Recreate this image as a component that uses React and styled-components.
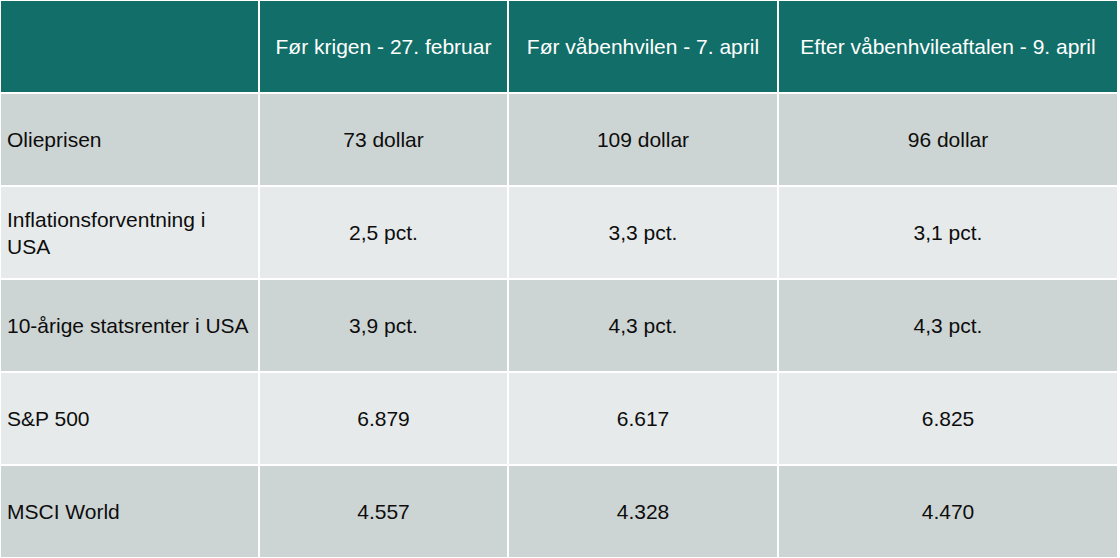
import styled, { createGlobalStyle } from 'styled-components';

const columns = [
	'',
	'Før krigen - 27. februar',
	'Før våbenhvilen - 7. april',
	'Efter våbenhvileaftalen - 9. april',
];

const rows = [
	{ label: 'Olieprisen', values: ['73 dollar', '109 dollar', '96 dollar'] },
	{ label: 'Inflationsforventning i USA', values: ['2,5 pct.', '3,3 pct.', '3,1 pct.'] },
	{ label: '10-årige statsrenter i USA', values: ['3,9 pct.', '4,3 pct.', '4,3 pct.'] },
	{ label: 'S&P 500', values: ['6.879', '6.617', '6.825'] },
	{ label: 'MSCI World', values: ['4.557', '4.328', '4.470'] },
];

const GlobalStyle = createGlobalStyle`
	html, body {
		margin: 0;
		padding: 0;
		background: #fff;
	}
	body {
		font-family: 'Liberation Sans', Arial, sans-serif;
	}
`;

const Table = styled.div`
	display: grid;
	grid-template-columns: 257px 247px 268px 338px;
	grid-auto-rows: 91px;
	gap: 2px;
	padding: 1px;
	width: 1116px;
	background: #fff;
`;

const HeadCell = styled.div`
	background: #116e68;
	color: #fff;
	font-size: 21px;
	display: flex;
	align-items: center;
	justify-content: center;
	text-align: center;
	padding: 1px 4px 0;
`;

const Cell = styled.div`
	background: ${({ $odd }) => ($odd ? '#cdd5d4' : '#e6eaea')};
	color: #0d0d0d;
	font-size: 21px;
	line-height: 27px;
	display: flex;
	align-items: center;
	justify-content: ${({ $label }) => ($label ? 'flex-start' : 'center')};
	text-align: ${({ $label }) => ($label ? 'left' : 'center')};
	padding: 0 6px;
`;

const App = () => {
	return (
		<>
			<GlobalStyle />
			<Table>
				{columns.map((c, i) => (
					<HeadCell key={`h${i}`}>{c}</HeadCell>
				))}
				{rows.flatMap((r, i) => [
					<Cell key={`l${i}`} $label $odd={i % 2 === 0}>
						{r.label}
					</Cell>,
					...r.values.map((v, j) => (
						<Cell key={`v${i}${j}`} $odd={i % 2 === 0}>
							{v}
						</Cell>
					)),
				])}
			</Table>
		</>
	);
};

export default App;
